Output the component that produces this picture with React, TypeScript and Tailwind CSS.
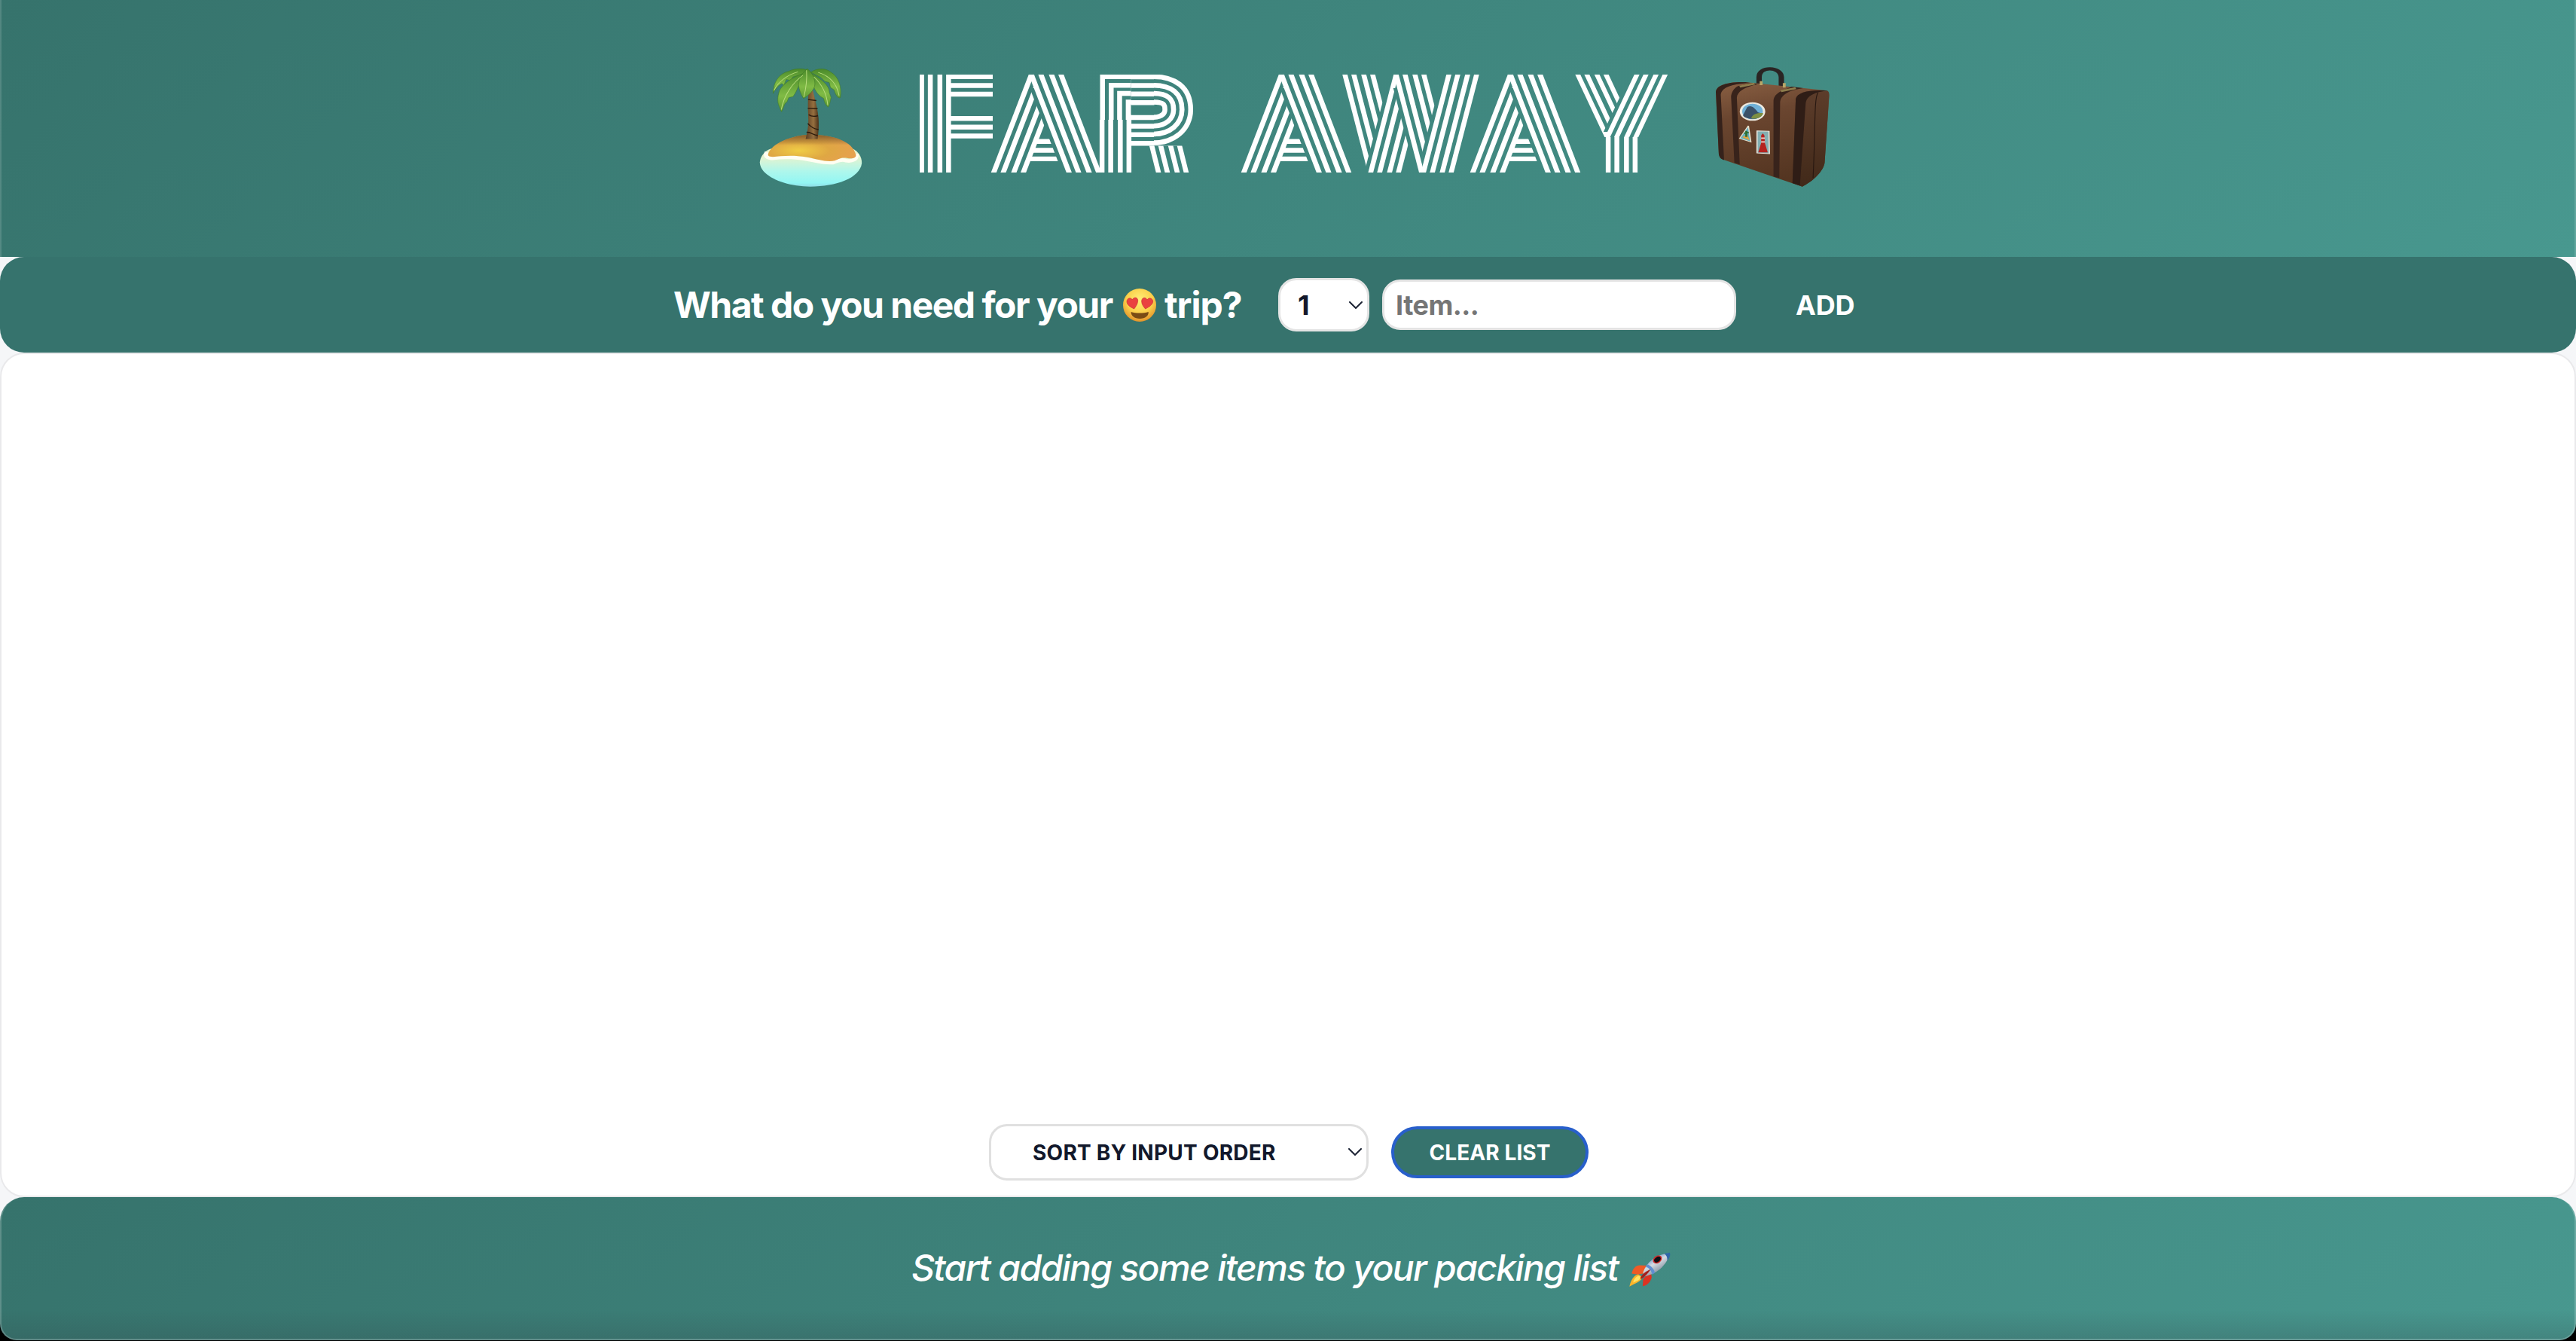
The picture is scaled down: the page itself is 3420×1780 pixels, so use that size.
const STRIPES = [
  { width: 39, color: "white" },
  { width: 26, color: "black" },
  { width: 16, color: "white" },
  { width: 3, color: "black" },
];
const GAP = [{ width: 49, color: "black" }];

type Piece = {
  ch: string;
  /** horizontal position of the glyph at the top of the artwork */
  x: number;
  base: number;
  size: number;
  sx?: number;
  /** horizontal drift per unit of height */
  slant?: number;
  middle?: boolean;
  rings?: typeof GAP;
  clip: [number, number, number, number];
};

const bar = (x: number, slant: number, sx: number, y0 = 0, y1 = 130, rings = STRIPES): Piece => {
  const left = Math.min(x + slant * y0, x + slant * y1) - 30;
  const right = Math.max(x + slant * y0, x + slant * y1) + 30;
  return { ch: "I", x, base: 165, size: 270, sx, slant, middle: true, rings, clip: [left, y0, right - left, y1 - y0] };
};

const letterA = (x: number): Piece[] => [
  { ch: "F", x: x - 110, base: 161, size: 192, sx: 2, clip: [x - 36, 85, 72, 30] },
  bar(x, -0.385, 1.1),
  bar(x, 0.385, 1.1, 18, 130, GAP),
  bar(x, 0.385, 1.1),
];

// Coordinates are local to the 992 x 130 title artwork; clip is [x, y, width, height].
const PIECES: Piece[] = [
  { ch: "F", x: -47, base: 142, size: 192, sx: 2, clip: [41, 0, 56, 86] },
  bar(20.5, 0, 1),
  ...letterA(168),
  { ch: "P", x: 243, base: 116, size: 138, clip: [238, 0, 43, 61] },
  { ch: "F", x: 202, base: 127.7, size: 155, sx: 2, clip: [280.5, 0, 31, 95] },
  { ch: "P", x: 273, base: 116, size: 138, clip: [311, 0, 60, 95] },
  bar(260, 0, 1, 60, 130),
  bar(303, 0.25, 1.03, 94.5, 130),
  ...letterA(500),
  bar(583, 0.26, 1.03),
  bar(651, -0.26, 1.03, 0, 130, GAP),
  bar(651, -0.26, 1.03),
  bar(651, 0.26, 1.03, 18, 112, GAP),
  bar(651, 0.26, 1.03),
  bar(721, -0.26, 1.03, 0, 112, GAP),
  bar(721, -0.26, 1.03),
  ...letterA(804),
  bar(892.5, 0.47, 1.05, 0, 83),
  bar(971, -0.47, 1.05, 0, 76, GAP),
  bar(971, -0.47, 1.05, 0, 83),
  bar(932, 0, 1, 83, 130),
];

function Title() {
  return (
    <svg className="h-[130px] w-[994px] shrink-0" viewBox="0 0 994 130" aria-label="FAR AWAY">
      <mask id="inline-stripes" maskUnits="userSpaceOnUse" x="0" y="0" width="994" height="130">
        {PIECES.map((p, i) => (
          <svg key={i} x={p.clip[0]} y={p.clip[1]} width={p.clip[2]} height={p.clip[3]} viewBox={p.clip.join(" ")} overflow="hidden">
            <g transform={`matrix(${p.sx ?? 1} 0 ${p.slant ?? 0} 1 ${p.x} 0)`}>
              {(p.rings ?? STRIPES).map((r) => (
                <text
                  key={r.width}
                  className="font-['Lato'] font-thin"
                  y={p.base}
                  fontSize={p.size}
                  textAnchor={p.middle ? "middle" : "start"}
                  fill={r.color}
                  stroke={r.color}
                  strokeWidth={r.width}
                  strokeMiterlimit={9}
                >
                  {p.ch}
                </text>
              ))}
            </g>
          </svg>
        ))}
      </mask>
      <g mask="url(#inline-stripes)">
        <text className="font-['Lato'] font-thin" x="0" y="130" fontSize="180" textLength="994" fill="white" stroke="white" strokeWidth="260">
          FAR AWAY
        </text>
      </g>
    </svg>
  );
}

function Island() {
  return (
    <svg className="h-[158px] w-[137px] shrink-0" viewBox="70 62 336 472" preserveAspectRatio="none" role="img" aria-label="🏝️">
      <defs>
        <linearGradient id="sea" x1="0" y1="0" x2="0" y2="1">
          <stop offset="0.2" stopColor="#e9f3cd" />
          <stop offset="0.6" stopColor="#aef7ec" />
          <stop offset="0.9" stopColor="#93f6f4" />
          <stop offset="1" stopColor="#8fdde6" />
        </linearGradient>
        <radialGradient id="sand" cx="0.35" cy="0.6" r="0.7">
          <stop offset="0" stopColor="#f0cd45" />
          <stop offset="0.5" stopColor="#dfa743" />
          <stop offset="1" stopColor="#e8a050" />
        </radialGradient>
        <linearGradient id="dune" x1="0" y1="0" x2="0" y2="1">
          <stop offset="0" stopColor="#6b4a20" stopOpacity="0.8" />
          <stop offset="0.45" stopColor="#6b4a20" stopOpacity="0" />
        </linearGradient>
        <linearGradient id="trunk">
          <stop offset="0" stopColor="#5a3c22" />
          <stop offset="0.6" stopColor="#96703f" />
          <stop offset="1" stopColor="#4b3018" />
        </linearGradient>
        <linearGradient id="leaf" x1="0" y1="0" x2="0" y2="1">
          <stop offset="0" stopColor="#4a8a2a" />
          <stop offset="0.6" stopColor="#80bb45" />
          <stop offset="1" stopColor="#5f9a35" />
        </linearGradient>
      </defs>
      <path d="M72 436C74 410 90 388 112 382H372C392 392 404 415 404 440C398 500 320 533 236 533C150 533 72 490 72 436Z" fill="url(#sea)" />
      <path d="M95 396C88 410 94 420 112 421C150 414 200 416 240 428C270 436 292 440 310 438C326 430 340 424 352 430C372 434 390 426 386 404" fill="none" stroke="#fffef2" strokeWidth="14" />
      <path d="M99 404C110 360 180 328 238 327C310 328 375 352 385 408C386 420 372 424 356 420C336 416 330 424 316 430C290 438 260 424 224 416C180 406 140 412 114 415C100 414 98 410 99 404Z" fill="url(#sand)" />
      <path d="M99 404C110 360 180 328 238 327C310 328 375 352 385 408L240 420Z" fill="url(#dune)" />
      <path d="M232 145C226 200 230 240 230 270C230 300 224 330 221 344H260C264 310 264 290 263 262C260 220 250 180 243 145Z" fill="url(#trunk)" />
      <path d="M229 188L256 192M228 222L260 224M231 248C240 256 250 256 261 252M228 283C240 300 250 304 263 307M224 318C236 314 246 330 260 330" fill="none" stroke="#2c1a0c" strokeWidth="4" />
      <g fill="url(#leaf)" stroke="#3d7a24" strokeWidth="1.5">
        <path d="M238 80C225 62 188 62 165 76C135 84 115 120 115 164C125 140 134 130 144 124L150 132L158 108L172 112L180 98Z" />
        <path d="M238 80C260 60 290 64 304 80C328 96 340 140 334 180C326 184 318 170 314 150L302 140L298 120L284 116L270 100Z" />
        <path d="M226 80C190 90 150 120 136 152C128 180 130 200 134 212C138 224 140 234 143 236C150 220 152 200 160 198L166 180L180 176C196 150 200 120 212 100Z" />
        <path d="M232 80C262 96 300 130 298 160L304 180C300 196 300 212 294 218C286 208 282 200 280 184L270 176C252 160 240 120 232 90Z" />
        <path d="M226 66C240 76 256 110 250 136C244 160 224 176 214 184C206 168 200 150 198 130C200 100 212 80 226 66Z" />
      </g>
      <path d="M224 72C226 110 222 146 215 178M212 92C180 120 150 170 142 228M248 98C276 130 290 170 293 210M196 78C160 90 130 120 118 152M262 80C304 96 324 130 330 172" fill="none" stroke="#b8dd7c" strokeWidth="2.5" />
    </svg>
  );
}

function Suitcase() {
  return (
    <svg className="h-[159px] w-[151px] shrink-0" viewBox="1236 58 276 477" preserveAspectRatio="none" role="img" aria-label="🧳">
      <defs>
        <linearGradient id="front" x1="0" y1="0" x2="0.2" y2="1">
          <stop offset="0" stopColor="#8a6043" />
          <stop offset="0.35" stopColor="#6b4630" />
          <stop offset="1" stopColor="#543521" />
        </linearGradient>
        <linearGradient id="side" x1="0" y1="0" x2="0" y2="1">
          <stop offset="0" stopColor="#5d3d2b" />
          <stop offset="1" stopColor="#412919" />
        </linearGradient>
      </defs>
      <path d="M1341 130V98C1341 52 1394 56 1395 98V142" fill="none" stroke="#2a2423" strokeWidth="13" />
      <path d="M1236 158C1236 132 1262 116 1308 118L1498 150C1508 152 1511 158 1511 172L1500 440C1496 480 1464 520 1446 534L1388 502L1256 428C1246 424 1243 412 1243 398Z" fill="url(#front)" />
      <path d="M1236 158C1236 132 1262 116 1308 118L1322 122C1280 124 1250 136 1248 168L1256 428C1246 424 1243 412 1243 398Z" fill="#35221b" />
      <path d="M1290 134L1326 122L1338 126C1304 138 1288 156 1287 180L1294 446L1281 440L1273 176C1274 158 1280 142 1290 134Z" fill="#38231b" />
      <path d="M1392 156L1420 136L1448 142C1412 150 1394 170 1392 196L1390 500L1376 494V194C1376 174 1384 164 1392 156Z" fill="#38231b" />
      <path d="M1430 184C1434 160 1460 148 1506 152C1511 156 1511 164 1511 172L1500 440C1496 480 1464 520 1446 534L1422 520Z" fill="url(#side)" />
      <path d="M1430 184C1434 160 1460 148 1506 152C1470 160 1456 176 1454 204L1440 530L1422 520Z" fill="#2f1d16" />
      <path d="M1484 160C1474 180 1478 300 1472 500" fill="none" stroke="#271710" strokeWidth="2" />
      <path d="M1294 136L1330 124M1394 154L1430 142" stroke="#8d7d4c" strokeWidth="8" />
      <path d="M1346 114V130M1402 122V140" stroke="#b9a667" strokeWidth="7" />
      <ellipse cx="1325" cy="235" rx="28" ry="34" fill="#6fb0d6" stroke="#ece9df" strokeWidth="6" />
      <path d="M1302 250L1312 218C1322 206 1332 224 1338 238L1350 244C1346 262 1330 266 1322 264C1310 262 1304 258 1302 250Z" fill="#3a5168" />
      <path d="M1322 262C1324 244 1340 238 1351 242C1348 256 1338 268 1322 262Z" fill="#7d8f42" />
      <path d="M1315 292L1321 356L1294 342Z" fill="#62b0c4" stroke="#e4ddc8" strokeWidth="3" />
      <path d="M1300 338L1318 350L1312 326Z" fill="#dfa343" />
      <path d="M1310 312V336M1304 322L1316 318" stroke="#2f6d32" strokeWidth="5" />
      <path d="M1336 312L1365 314L1366 403L1336 400Z" fill="#83afb2" stroke="#e9e4da" strokeWidth="3" />
      <path d="M1346 330L1350 322L1354 330L1355 360L1362 398H1339L1346 360Z" fill="#b5231f" />
      <path d="M1346 341H1355M1346 356H1355" stroke="#f2d8d0" strokeWidth="5" />
    </svg>
  );
}

function HeartEyes() {
  return (
    <svg className="h-[44px] w-[44px] shrink-0" viewBox="30 33 132 132" role="img" aria-label="😍">
      <defs>
        <radialGradient id="face" cx="0.5" cy="0.35" r="0.65">
          <stop offset="0" stopColor="#fff07a" />
          <stop offset="0.6" stopColor="#fbd04b" />
          <stop offset="1" stopColor="#e2932a" />
        </radialGradient>
      </defs>
      <circle cx="96" cy="99" r="66" fill="url(#face)" />
      <g fill="#ea4240" stroke="#c92c33" strokeWidth="2">
        <path d="M74 114C58 106 45 98 45 84C46 70 62 67 67 78C73 64 90 68 89 82C88 96 80 106 74 114Z" />
        <path d="M119 114C112 106 104 96 104 84C104 68 120 65 126 78C132 67 148 71 149 84C148 98 134 106 119 114Z" />
      </g>
      <path d="M62 126C80 132 112 132 131 126C134 140 118 153 97 153C76 153 60 140 62 126Z" fill="#7a4c15" />
    </svg>
  );
}

function Rocket() {
  return (
    <svg className="h-[46px] w-[55px] shrink-0" viewBox="36 34 166 136" preserveAspectRatio="none" role="img" aria-label="🚀">
      <defs>
        <linearGradient id="hull" x1="0" y1="0" x2="0.7" y2="1">
          <stop offset="0.2" stopColor="#4d7fc0" />
          <stop offset="0.5" stopColor="#d4dbe2" />
          <stop offset="0.8" stopColor="#8d99a8" />
        </linearGradient>
      </defs>
      <path d="M46 118C50 100 62 86 78 86L114 87L92 118L70 122Z" fill="#ee5a26" />
      <path d="M122 108L126 132C122 152 108 164 90 168L92 140Z" fill="#dc3322" />
      <path d="M37 169C42 146 54 124 72 121L90 132C82 150 60 156 37 169Z" fill="#fdb52a" />
      <path d="M52 154C54 140 64 128 76 127L84 134C76 146 64 148 52 154Z" fill="#ffe565" />
      <path d="M92 112C106 76 140 44 196 38C202 50 180 84 158 102C140 116 118 126 94 130Z" fill="url(#hull)" />
      <path d="M176 40L198 36C204 44 196 60 188 68C190 56 186 46 176 40Z" fill="#2f67a8" />
      <path d="M108 82C120 84 140 104 138 116L128 122C126 108 114 94 102 92Z" fill="#5f8fd0" />
      <path d="M80 136C88 120 104 108 122 102C112 118 98 130 84 140Z" fill="#a3201c" />
      <ellipse cx="149" cy="63" rx="17" ry="12" transform="rotate(-35 149 63)" fill="#0e0e12" stroke="#cf2a2a" strokeWidth="5" />
    </svg>
  );
}

function Chevron({ className }: { className: string }) {
  return (
    <svg className={className} viewBox="0 0 18 10" fill="none" stroke="#1b2233" strokeWidth="2" strokeLinecap="round">
      <path d="M1 1L9 9L17 1" />
    </svg>
  );
}

export default function App() {
  return (
    <div className="flex h-[1780px] w-[3420px] flex-col overflow-hidden bg-[#f5f6f8] font-['Inter',sans-serif]">
      <header className="flex h-[341px] shrink-0 items-start border-x-2 border-white/15 bg-[linear-gradient(135deg,#36736c,#48988f)] bg-origin-border pt-[90px] pl-[1006px]">
        <Island />
        <h1 className="mt-[9px] ml-[76px]">
          <Title />
        </h1>
        <div className="-mt-px ml-[63px]">
          <Suitcase />
        </div>
      </header>

      <form className="flex h-[127px] shrink-0 items-center rounded-[32px] bg-[#36736d] pl-[894px]">
        <h3 className="flex w-[803px] items-center text-[48px] leading-none font-bold tracking-[-1.5px] whitespace-nowrap text-white">
          <span className="w-[597px]">What do you need for your</span>
          <HeartEyes />
          <span className="ml-[11px] tracking-[-1px]">trip?</span>
        </h3>
        <div className="relative h-[71px] w-[121px]">
          <select className="size-full appearance-none rounded-[24px] border-[3px] border-[#e4e4e4] bg-white pl-[23px] text-[36px] font-bold text-[#12182b]">
            <option>1</option>
          </select>
          <Chevron className="absolute top-[31px] right-[9px] h-[10px] w-[18px]" />
        </div>
        <input
          className="ml-[17px] h-[67px] w-[470px] rounded-[24px] border-[3px] border-[#e4e4e4] bg-white px-[15px] text-[36px] font-bold tracking-[-0.5px] placeholder:text-[#757575]"
          placeholder="Item..."
        />
        <button className="ml-[79px] text-[36px] font-bold tracking-[-0.2px] text-white">ADD</button>
      </form>

      <main className="flex h-[1121px] shrink-0 items-end rounded-[32px] border-2 border-[#e9e9eb] bg-white pb-[20px] pl-[1311px]">
        <div className="flex items-center">
          <div className="relative h-[75px] w-[504px]">
            <select className="size-full appearance-none rounded-[24px] border-[3px] border-[#e0e0e0] bg-white pl-[55px] text-[28px] font-bold tracking-[0.25px] text-[#12182b] uppercase">
              <option>Sort by input order</option>
            </select>
            <Chevron className="absolute top-[32px] right-[9px] h-[10px] w-[18px]" />
          </div>
          <button className="ml-[30px] h-[69px] w-[262px] rounded-full border-4 border-[#285fcb] bg-[#36736d] text-[28px] font-bold tracking-[0.1px] text-white uppercase">
            Clear list
          </button>
        </div>
      </main>

      <div className="h-[191px] shrink-0 bg-[linear-gradient(#f5f6f8_50%,#000_50%)]">
        <footer className="flex h-[190px] items-start rounded-t-[32px] rounded-b-[22px] border-x-2 border-b-2 border-white/20 bg-[linear-gradient(to_top,rgba(50,70,75,0.24),transparent_40px),linear-gradient(135deg,#36736c,#48988f)] bg-origin-border pt-[73px] pl-[1208px]">
          <em className="-mt-[3px] w-[953px] text-[48px] leading-[48px] font-medium tracking-[-1.65px] whitespace-nowrap text-white">
            Start adding some items to your packing list
          </em>
          <Rocket />
        </footer>
      </div>
    </div>
  );
}
